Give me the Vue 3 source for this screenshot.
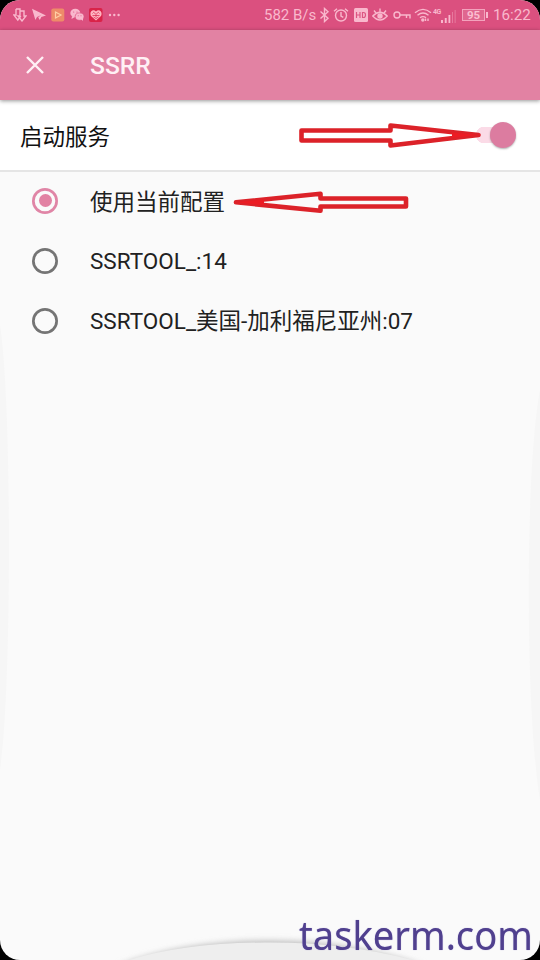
<script setup>
import { ref } from 'vue'

const profiles = ['使用当前配置', 'SSRTOOL_:14', 'SSRTOOL_美国-加利福尼亚州:07']
const selected = ref(0)
const enabled = ref(true)
</script>

<template>
  <div class="device">
    <main class="screen">
      <header class="status">
        <div class="notifications">
          <svg width="14" height="14" viewBox="0 0 14 14" class="line">
            <path d="M3 1v6H.8l4 5 3-4M3 1h4v5M7 3h4v5h2l-4 5-4-5h2V3" />
          </svg>
          <svg width="14" height="14" viewBox="0 0 14 14" class="solid">
            <path d="M0 .8 14 7.5 9.3 9 7.8 12 6.2 9.3 9.5 7 5 9 3.4 12z" />
          </svg>
          <svg width="14" height="14" viewBox="0 0 14 14">
            <rect x=".3" y=".5" width="13" height="13" rx="2" fill="#ee8b69" />
            <path d="M4.5 4 10 7l-5.5 3z" fill="none" stroke="#ffd0a5" stroke-width="1.2" />
          </svg>
          <svg width="14" height="14" viewBox="0 0 14 14" class="solid">
            <ellipse cx="5.3" cy="5" rx="5" ry="4.3" /><path d="m2 8-.5 3L5 9z" />
            <ellipse cx="9.6" cy="8.6" rx="4.4" ry="3.7" stroke="#dd5582" stroke-width=".7" /><path d="m11 11 2 2V9z" />
            <g fill="#dd5582"><circle cx="3.7" cy="4" r=".6" /><circle cx="7" cy="4" r=".6" /><circle cx="8.2" cy="7.8" r=".5" /><circle cx="11" cy="7.8" r=".5" /></g>
          </svg>
          <svg width="14" height="14" viewBox="0 0 14 14">
            <rect width="13.5" height="14" rx="2" fill="#d92349" />
            <path d="M7 12.5 2 8C-.2 3.5 4.2.5 7 3.5c2.8-3 7.2 0 5 4.5z" fill="#ffb4c1" />
            <path d="m3.5 5.5 1.2-1.2L6 5.5m2 0 1.3-1.2 1.2 1.2M3.5 7.5h7M4.5 9 7 10.5 9.5 9M7 5v4" fill="none" stroke="#d92349" stroke-width=".7" />
          </svg>
          <svg width="14" height="14" viewBox="0 0 14 14" class="solid">
            <circle cx="2" cy="7" r="1.2" /><circle cx="6.3" cy="7" r="1.2" /><circle cx="10.6" cy="7" r="1.2" />
          </svg>
        </div>
        <div class="system">
          <span class="speed">582 B/s</span>
          <svg width="12" height="16" viewBox="0 0 12 16" class="line"><path d="m1.5 4.5 7.5 6.7L5.5 14.5v-13L9 4.8l-7.5 6.7" /></svg>
          <svg width="18" height="16" viewBox="0 0 18 16" class="line alarm">
            <circle cx="9" cy="8.5" r="5.5" /><path d="M9 5v4l2.3 1.3M2 4.3 5 1.7m8 0 3 2.6" />
          </svg>
          <svg width="14" height="14" viewBox="0 0 14 14" class="hd">
            <rect width="14" height="14" rx="1.5" fill="#f9b8cd" />
            <path d="M2.5 4v6M6 4v6M2.5 7H6M8.5 4.5v5h1q2 0 2-2.5t-2-2.5z" fill="none" stroke="#dd5582" stroke-width="1.2" />
          </svg>
          <svg width="16" height="16" viewBox="0 0 16 16" class="line eye">
            <path d="M.8 9Q8 1.5 15.2 9 8 17 .8 9zM2 3.5 4 6M8 1.5v3M14 3.5 12 6" /><circle cx="8" cy="9" r="2" class="dot" />
          </svg>
          <svg width="18" height="14" viewBox="0 0 18 14" class="line key">
            <circle cx="4" cy="7" r="3" /><path d="M7 7h10v3.5M13.5 7v3" />
          </svg>
          <svg width="18" height="16" viewBox="0 0 18 16" class="line wifi">
            <path d="M1 5.7Q9-1 17 5.7M3.5 8.3Q9 3.8 14.5 8.3M6 10.8q3-2.3 6 0" /><circle cx="8.8" cy="13" r="1" class="dot" /><path d="M11.5 14v-2.5m2.5 0V14" />
          </svg>
          <span class="cell">
            <span class="network">4G</span>
            <svg width="15" height="13" viewBox="0 0 15 13" class="solid">
              <path d="M0 10h2v3H0zM3.8 8h1.9v5H3.8zM7.5 5h1.8v8H7.5z" /><path d="M11 2h.8v11H11zM13.7 0h.8v13h-.8z" opacity=".5" />
            </svg>
          </span>
          <span class="battery">95</span>
          <time>16:22</time>
        </div>
      </header>

      <nav class="toolbar">
        <svg width="20" height="20" viewBox="0 0 20 20"><path d="m2 2 16 16M18 2 2 18" /></svg>
        <h1>SSRR</h1>
      </nav>

      <section class="service">
        <span>启动服务</span>
        <div class="control">
          <svg width="184" height="26" viewBox="0 0 184 26" class="arrow">
            <path d="M3.5 8.5h89v-5L180.5 13 92.5 23.5v-5h-89z" /><path d="m154 10.5 27 2.5-27 3z" fill="#ec1c24" stroke="none" />
          </svg>
          <button class="toggle" :class="{ on: enabled }" @click="enabled = !enabled"><i /></button>
        </div>
      </section>

      <ul class="profiles">
        <li v-for="(name, index) in profiles" :key="name" @click="selected = index">
          <span class="radio" :class="{ checked: selected === index }" />
          <span class="name">{{ name }}</span>
          <svg v-if="index === 0" width="178" height="22" viewBox="0 0 178 22" class="arrow pointer">
            <path d="M3 11.3 87.5 2.8V7.5H173v8H87.5v4.2z" /><path d="m3 11.3 28-3v6z" fill="#ec1c24" stroke="none" />
          </svg>
        </li>
      </ul>

      <svg class="edges" viewBox="0 0 540 960">
        <defs>
          <filter id="soft" x="-10%" y="-60%" width="120%" height="220%"><feGaussianBlur stdDeviation="3" /></filter>
        </defs>
        <path d="M0 325C12 400 12 690 0 770zM540 390C525 470 525 710 540 800z" fill="#f6f6f6" />
        <path d="M118 966Q180 942 265 941T424 966z" fill="#b8b8b8" filter="url(#soft)" />
        <path d="M129 960Q185 943 265 942.5T412 960z" fill="#eee" />
      </svg>
      <div class="watermark">taskerm.com</div>
    </main>
  </div>
</template>

<style>
body { margin: 0; background: #000; }
</style>

<style scoped>
* { box-sizing: border-box; }
.device { width: 540px; height: 960px; background: #000; font-family: Roboto, "Noto Sans CJK SC", sans-serif; }
.screen { position: relative; width: 540px; height: 960px; overflow: hidden; border-radius: 20px; background: #fafafa; }
svg { display: block; flex: none; }
.status { display: flex; justify-content: space-between; align-items: center; height: 30px; padding: 0 10px 0 13px; background: #db507f; color: #f9b8cd; }
.notifications { display: flex; gap: 5px; }
.line { fill: none; stroke: #f9b8cd; stroke-width: 1.4; }
.solid, .dot { fill: #f9b8cd; }
.system { display: flex; align-items: center; height: 30px; }
.speed { width: 55px; font-size: 15px; line-height: 30px; white-space: nowrap; }
.alarm { margin-left: 1px; }
.hd { margin-left: 4px; }
.eye { margin-left: 4px; }
.key { margin-left: 5px; }
.wifi { margin-left: 3px; }
.cell { display: flex; align-items: flex-end; width: 24px; height: 15px; margin-left: 1px; }
.network { align-self: flex-start; width: 8px; font-size: 7px; font-weight: 700; line-height: 8px; letter-spacing: -.5px; }
.battery { position: relative; width: 23px; height: 12px; margin: 0 8px 0 5px; border: 1px solid #f3a3bd; background: #e0678f; color: #fbbdd0; font-size: 11.5px; font-weight: 700; line-height: 11px; text-align: center; }
.battery::after { content: ""; position: absolute; left: 23px; top: 2px; width: 1.5px; height: 6px; background: #f9b8cd; }
time { width: 37px; font-size: 15.2px; white-space: nowrap; }
.toolbar { position: relative; display: flex; align-items: center; gap: 45px; height: 70px; padding: 1px 25px 0; background: #e282a3; color: #fff0f5; box-shadow: 0 1px 4px rgba(0,0,0,.42); }
.toolbar svg { margin-top: -1px; fill: none; stroke: #fff0f5; stroke-width: 2.4; }
h1 { margin: 0; font-size: 24.6px; line-height: 32px; font-weight: 500; }
.service { display: flex; align-items: center; justify-content: space-between; height: 72px; padding: 0 24px 0 20px; border-bottom: 2px solid #e5e5e5; background: #fff; color: #111; font-size: 22.5px; }
.control { display: flex; align-items: center; }
.arrow { fill: none; stroke: #dc2229; stroke-width: 4.6; stroke-linejoin: round; }
.control .arrow { position: relative; z-index: 1; margin-right: -6px; }
.toggle { display: flex; align-items: center; width: 40px; height: 28px; margin: 0; padding: 0; border: 0; border-radius: 14px; background: linear-gradient(#ddd, #ddd) 0 50% / 38px 17px no-repeat; }
.toggle.on { justify-content: flex-end; background: radial-gradient(circle at 8px 50%, #fbdbe7 8px, transparent 8.5px) no-repeat, linear-gradient(#fbdbe7, #fbdbe7) 8px 50% / 20px 16px no-repeat; }
.toggle i { width: 26px; height: 26px; border-radius: 50%; background: #dc7ca0; box-shadow: 0 1px 2px rgba(0,0,0,.3); }
.profiles { margin: -1px 0 0; padding: 0 0 0 32px; list-style: none; }
li { display: flex; align-items: center; height: 60px; color: #212121; font-size: 22.5px; line-height: 30px; white-space: nowrap; }
li:first-child .name { padding-top: 2px; }
.radio { display: grid; place-items: center; flex: none; width: 26px; height: 26px; margin: -1px 32px 0 0; border-radius: 50%; box-shadow: inset 0 0 0 2.7px #747474; }
.radio.checked { box-shadow: inset 0 0 0 2.7px #e085a6; }
.radio.checked::after { content: ""; width: 13px; height: 13px; border-radius: 50%; background: #e282a3; }
.pointer { margin: 1px 0 0 8px; }
.edges { position: absolute; inset: 0; width: 540px; height: 960px; pointer-events: none; }
.watermark { position: absolute; left: 299px; top: 912px; color: #50408e; font: 40px/46px "Noto Sans", sans-serif; text-shadow: 0 0 1px #9b90cc; white-space: nowrap; transform: scaleX(.953); transform-origin: left; }
</style>
